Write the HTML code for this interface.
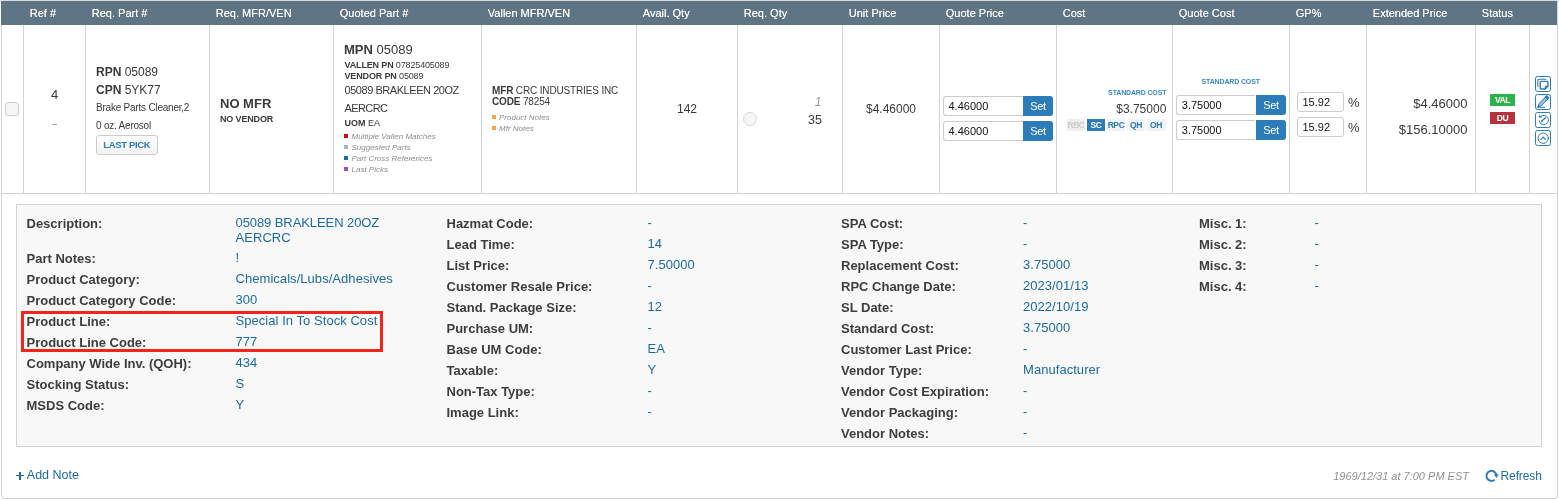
<!DOCTYPE html>
<html><head><meta charset="utf-8"><title>Quote line</title>
<style>
html,body{margin:0;padding:0;background:#fff;}
body{width:1559px;height:500px;position:relative;overflow:hidden;font-family:"Liberation Sans",sans-serif;}
.t{position:absolute;line-height:1;white-space:nowrap;}
.r{position:absolute;box-sizing:content-box;}
b{font-weight:bold;}
#w{position:absolute;left:0;top:0;width:1559px;height:500px;will-change:transform;overflow:hidden;}
</style></head><body><div id="w">
<div class="r" style="left:1px;top:0px;width:1555px;height:498px;border:1px solid #d4d4d4;border-top:none;border-radius:0 0 4px 4px;background:#fff;"></div>
<div class="r" style="left:0px;top:0px;width:1559px;height:1px;background:#dcdcdc;"></div>
<div class="r" style="left:1px;top:1px;width:1556px;height:24px;background:#5f7585;"></div>
<span class="t" style="top:7.69px;font-size:11px;color:#fff;left:29.8px;text-shadow:0 0 0.4px rgba(255,255,255,.7);">Ref #</span>
<span class="t" style="top:7.69px;font-size:11px;color:#fff;left:91.8px;text-shadow:0 0 0.4px rgba(255,255,255,.7);">Req. Part #</span>
<span class="t" style="top:7.69px;font-size:11px;color:#fff;left:215.8px;text-shadow:0 0 0.4px rgba(255,255,255,.7);">Req. MFR/VEN</span>
<span class="t" style="top:7.69px;font-size:11px;color:#fff;left:339.8px;text-shadow:0 0 0.4px rgba(255,255,255,.7);">Quoted Part #</span>
<span class="t" style="top:7.69px;font-size:11px;color:#fff;left:487.8px;text-shadow:0 0 0.4px rgba(255,255,255,.7);">Vallen MFR/VEN</span>
<span class="t" style="top:7.69px;font-size:11px;color:#fff;left:642.8px;text-shadow:0 0 0.4px rgba(255,255,255,.7);">Avail. Qty</span>
<span class="t" style="top:7.69px;font-size:11px;color:#fff;left:743.8px;text-shadow:0 0 0.4px rgba(255,255,255,.7);">Req. Qty</span>
<span class="t" style="top:7.69px;font-size:11px;color:#fff;left:848.8px;text-shadow:0 0 0.4px rgba(255,255,255,.7);">Unit Price</span>
<span class="t" style="top:7.69px;font-size:11px;color:#fff;left:945.8px;text-shadow:0 0 0.4px rgba(255,255,255,.7);">Quote Price</span>
<span class="t" style="top:7.69px;font-size:11px;color:#fff;left:1062.8px;text-shadow:0 0 0.4px rgba(255,255,255,.7);">Cost</span>
<span class="t" style="top:7.69px;font-size:11px;color:#fff;left:1178.8px;text-shadow:0 0 0.4px rgba(255,255,255,.7);">Quote Cost</span>
<span class="t" style="top:7.69px;font-size:11px;color:#fff;left:1295.8px;text-shadow:0 0 0.4px rgba(255,255,255,.7);">GP%</span>
<span class="t" style="top:7.69px;font-size:11px;color:#fff;left:1372.8px;text-shadow:0 0 0.4px rgba(255,255,255,.7);">Extended Price</span>
<span class="t" style="top:7.69px;font-size:11px;color:#fff;left:1481.8px;text-shadow:0 0 0.4px rgba(255,255,255,.7);">Status</span>
<div class="r" style="left:23px;top:25px;width:1px;height:168px;background:#d4d4d4;"></div>
<div class="r" style="left:85px;top:25px;width:1px;height:168px;background:#d4d4d4;"></div>
<div class="r" style="left:209px;top:25px;width:1px;height:168px;background:#d4d4d4;"></div>
<div class="r" style="left:333px;top:25px;width:1px;height:168px;background:#d4d4d4;"></div>
<div class="r" style="left:481px;top:25px;width:1px;height:168px;background:#d4d4d4;"></div>
<div class="r" style="left:636px;top:25px;width:1px;height:168px;background:#d4d4d4;"></div>
<div class="r" style="left:737px;top:25px;width:1px;height:168px;background:#d4d4d4;"></div>
<div class="r" style="left:842px;top:25px;width:1px;height:168px;background:#d4d4d4;"></div>
<div class="r" style="left:939px;top:25px;width:1px;height:168px;background:#d4d4d4;"></div>
<div class="r" style="left:1056px;top:25px;width:1px;height:168px;background:#d4d4d4;"></div>
<div class="r" style="left:1172px;top:25px;width:1px;height:168px;background:#d4d4d4;"></div>
<div class="r" style="left:1289px;top:25px;width:1px;height:168px;background:#d4d4d4;"></div>
<div class="r" style="left:1366px;top:25px;width:1px;height:168px;background:#d4d4d4;"></div>
<div class="r" style="left:1475px;top:25px;width:1px;height:168px;background:#d4d4d4;"></div>
<div class="r" style="left:1529px;top:25px;width:1px;height:168px;background:#d4d4d4;"></div>
<div class="r" style="left:1px;top:193px;width:1556px;height:1px;background:#d4d4d4;"></div>
<div class="r" style="left:5px;top:102px;width:12px;height:12px;border:1px solid #cfcfcf;border-radius:3px;background:#f6f6f6;"></div>
<span class="t" style="top:88.30px;font-size:13px;color:#3a3a3a;left:-95.5px;width:300px;text-align:center;">4</span>
<div class="r" style="left:51.5px;top:124.2px;width:5.5px;height:1.3px;background:#a6a6a6;"></div>
<span class="t" style="top:65.84px;font-size:12px;color:#3a3a3a;left:96px;"><b>RPN</b> 05089</span>
<span class="t" style="top:83.84px;font-size:12px;color:#3a3a3a;left:96px;"><b>CPN</b> 5YK77</span>
<span class="t" style="top:103.03px;font-size:10px;color:#3a3a3a;letter-spacing:-0.22px;left:96px;">Brake Parts Cleaner,2</span>
<span class="t" style="top:120.94px;font-size:10px;color:#3a3a3a;letter-spacing:-0.22px;left:96px;">0 oz. Aerosol</span>
<div class="r" style="left:96px;top:135px;width:60px;height:18px;border:1px solid #ccc;border-radius:3px;background:linear-gradient(#fff,#f2f2f2);"></div>
<span class="t" style="top:140.36px;font-size:9.5px;color:#2b7cb8;font-weight:bold;letter-spacing:-0.35px;left:-23.200000000000003px;width:300px;text-align:center;">LAST PICK</span>
<span class="t" style="top:97.40px;font-size:13px;color:#3a3a3a;font-weight:bold;left:220px;">NO MFR</span>
<span class="t" style="top:114.58px;font-size:9px;color:#3a3a3a;font-weight:bold;letter-spacing:-0.15px;left:220px;">NO VENDOR</span>
<span class="t" style="top:43.00px;font-size:13px;color:#3a3a3a;left:344px;"><b>MPN</b> 05089</span>
<span class="t" style="top:60.88px;font-size:9px;color:#3a3a3a;letter-spacing:-0.15px;left:344.5px;"><b>VALLEN PN</b> 07825405089</span>
<span class="t" style="top:72.08px;font-size:9px;color:#3a3a3a;letter-spacing:-0.15px;left:344.5px;"><b>VENDOR PN</b> 05089</span>
<span class="t" style="top:84.69px;font-size:11px;color:#3a3a3a;letter-spacing:-0.45px;left:344.5px;">05089 BRAKLEEN 20OZ</span>
<span class="t" style="top:103.09px;font-size:11px;color:#3a3a3a;letter-spacing:-0.6px;left:344.5px;">AERCRC</span>
<span class="t" style="top:119.08px;font-size:9px;color:#3a3a3a;left:344.5px;"><b>UOM</b> EA</span>
<div class="r" style="left:344px;top:134px;width:4px;height:4px;background:#d0021b;"></div>
<span class="t" style="top:132.73px;font-size:8px;color:#8e8e8e;font-style:italic;left:351.5px;">Multiple Vallen Matches</span>
<div class="r" style="left:344px;top:145.1px;width:4px;height:4px;background:#a3b4c2;"></div>
<span class="t" style="top:143.83px;font-size:8px;color:#8e8e8e;font-style:italic;left:351.5px;">Suggested Parts</span>
<div class="r" style="left:344px;top:156px;width:4px;height:4px;background:#1b6ca8;"></div>
<span class="t" style="top:154.73px;font-size:8px;color:#8e8e8e;font-style:italic;left:351.5px;">Part Cross References</span>
<div class="r" style="left:344px;top:167.2px;width:4px;height:4px;background:#9b4fc4;"></div>
<span class="t" style="top:165.93px;font-size:8px;color:#8e8e8e;font-style:italic;left:351.5px;">Last Picks</span>
<span class="t" style="top:85.83px;font-size:10px;color:#3a3a3a;letter-spacing:-0.15px;left:492px;"><b>MFR</b> CRC INDUSTRIES INC</span>
<span class="t" style="top:97.13px;font-size:10px;color:#3a3a3a;letter-spacing:-0.15px;left:492px;"><b>CODE</b> 78254</span>
<div class="r" style="left:492px;top:115.2px;width:4px;height:4px;background:#f5a742;"></div>
<span class="t" style="top:113.93px;font-size:8px;color:#8e8e8e;font-style:italic;left:499px;">Product Notes</span>
<div class="r" style="left:492px;top:126.19999999999999px;width:4px;height:4px;background:#f5a742;"></div>
<span class="t" style="top:124.93px;font-size:8px;color:#8e8e8e;font-style:italic;left:499px;">Mfr Notes</span>
<span class="t" style="top:102.64px;font-size:12px;color:#3a3a3a;left:537px;width:300px;text-align:center;">142</span>
<div class="r" style="left:743px;top:112px;width:12px;height:12px;border:1px solid #d8d8d8;border-radius:50%;background:#f6f6f6;"></div>
<span class="t" style="top:95.84px;font-size:12px;color:#999;font-style:italic;right:737.5px;">1</span>
<span class="t" style="top:113.72px;font-size:12.5px;color:#3a3a3a;right:737px;">35</span>
<span class="t" style="top:103.24px;font-size:12px;color:#3a3a3a;left:741px;width:300px;text-align:center;">$4.46000</span>
<div class="r" style="left:943px;top:96px;width:80px;height:18px;border:1px solid #ccc;border-right:none;border-radius:3px 0 0 3px;background:#fff;width:79px;"></div>
<div class="r" style="left:1023px;top:96px;width:30px;height:20px;background:#2b7cb8;border-radius:0 3px 3px 0;"></div>
<span class="t" style="top:100.69px;font-size:11px;color:#111;left:948.5px;">4.46000</span>
<span class="t" style="top:100.89px;font-size:11px;color:#fff;letter-spacing:-0.3px;left:888.0px;width:300px;text-align:center;">Set</span>
<div class="r" style="left:943px;top:121px;width:80px;height:18px;border:1px solid #ccc;border-right:none;border-radius:3px 0 0 3px;background:#fff;width:79px;"></div>
<div class="r" style="left:1023px;top:121px;width:30px;height:20px;background:#2b7cb8;border-radius:0 3px 3px 0;"></div>
<span class="t" style="top:125.69px;font-size:11px;color:#111;left:948.5px;">4.46000</span>
<span class="t" style="top:125.89px;font-size:11px;color:#fff;letter-spacing:-0.3px;left:888.0px;width:300px;text-align:center;">Set</span>
<span class="t" style="top:89.27px;font-size:7px;color:#3a8ac4;font-weight:bold;letter-spacing:-0.15px;right:392.70000000000005px;">STANDARD COST</span>
<span class="t" style="top:103.04px;font-size:12px;color:#3a3a3a;right:392.70000000000005px;">$3.75000</span>
<div class="r" style="left:1067px;top:119px;width:18px;height:12px;background:#f0f0f0;"></div>
<span class="t" style="top:121.40px;font-size:8.5px;color:#ccc;font-weight:bold;letter-spacing:-0.4px;left:926.0px;width:300px;text-align:center;">RBC</span>
<div class="r" style="left:1087px;top:119px;width:18px;height:12px;background:#2b7cb8;"></div>
<span class="t" style="top:121.40px;font-size:8.5px;color:#fff;font-weight:bold;letter-spacing:-0.4px;left:946.0px;width:300px;text-align:center;">SC</span>
<div class="r" style="left:1107px;top:119px;width:18px;height:12px;background:#f4f4f4;"></div>
<span class="t" style="top:121.40px;font-size:8.5px;color:#2b7cb8;font-weight:bold;letter-spacing:-0.4px;left:966.0px;width:300px;text-align:center;">RPC</span>
<div class="r" style="left:1127px;top:119px;width:18px;height:12px;background:#f4f4f4;"></div>
<span class="t" style="top:121.40px;font-size:8.5px;color:#2b7cb8;font-weight:bold;letter-spacing:-0.4px;left:986.0px;width:300px;text-align:center;">QH</span>
<div class="r" style="left:1146px;top:119px;width:20px;height:12px;background:#f4f4f4;"></div>
<span class="t" style="top:121.40px;font-size:8.5px;color:#2b7cb8;font-weight:bold;letter-spacing:-0.4px;left:1006.0px;width:300px;text-align:center;">OH</span>
<span class="t" style="top:78.07px;font-size:7px;color:#3a8ac4;font-weight:bold;letter-spacing:-0.15px;left:1080.7px;width:300px;text-align:center;">STANDARD COST</span>
<div class="r" style="left:1176.3px;top:95px;width:79.7px;height:18px;border:1px solid #ccc;border-right:none;border-radius:3px 0 0 3px;background:#fff;width:78px;"></div>
<div class="r" style="left:1256.0px;top:95px;width:30px;height:20px;background:#2b7cb8;border-radius:0 3px 3px 0;"></div>
<span class="t" style="top:99.69px;font-size:11px;color:#111;left:1181.8px;">3.75000</span>
<span class="t" style="top:99.89px;font-size:11px;color:#fff;letter-spacing:-0.3px;left:1121.0px;width:300px;text-align:center;">Set</span>
<div class="r" style="left:1176.3px;top:120px;width:79.7px;height:18px;border:1px solid #ccc;border-right:none;border-radius:3px 0 0 3px;background:#fff;width:78px;"></div>
<div class="r" style="left:1256.0px;top:120px;width:30px;height:20px;background:#2b7cb8;border-radius:0 3px 3px 0;"></div>
<span class="t" style="top:124.69px;font-size:11px;color:#111;left:1181.8px;">3.75000</span>
<span class="t" style="top:124.89px;font-size:11px;color:#fff;letter-spacing:-0.3px;left:1121.0px;width:300px;text-align:center;">Set</span>
<div class="r" style="left:1297px;top:92px;width:45px;height:18px;border:1px solid #ccc;border-radius:3px;background:#fff;"></div>
<span class="t" style="top:96.69px;font-size:11px;color:#111;left:1302.5px;">15.92</span>
<span class="t" style="top:96.00px;font-size:13px;color:#383838;left:1348px;">%</span>
<div class="r" style="left:1297px;top:117px;width:45px;height:18px;border:1px solid #ccc;border-radius:3px;background:#fff;"></div>
<span class="t" style="top:121.69px;font-size:11px;color:#111;left:1302.5px;">15.92</span>
<span class="t" style="top:121.00px;font-size:13px;color:#383838;left:1348px;">%</span>
<span class="t" style="top:97.00px;font-size:13px;color:#3a3a3a;right:91.5px;">$4.46000</span>
<span class="t" style="top:123.00px;font-size:13px;color:#3a3a3a;right:91.5px;">$156.10000</span>
<div class="r" style="left:1490px;top:94px;width:25px;height:12px;background:#2cb34a;"></div>
<span class="t" style="top:96.42px;font-size:8.6px;color:#fff;font-weight:bold;letter-spacing:-0.5px;left:1352.5px;width:300px;text-align:center;">VAL</span>
<div class="r" style="left:1490px;top:112px;width:25px;height:12px;background:#b5343c;"></div>
<span class="t" style="top:114.42px;font-size:8.6px;color:#fff;font-weight:bold;letter-spacing:-0.5px;left:1352.5px;width:300px;text-align:center;">DU</span>
<div class="r" style="left:1535px;top:76px;width:14px;height:14px;border:1px solid #2b7cb8;border-radius:2.5px;background:#fff;"></div>
<svg class="r" style="left:1535.2px;top:76px" width="15.6" height="15.6" viewBox="0 0 15.6 15.6" fill="none" stroke="#2b7cb8" stroke-width="0.9" stroke-linecap="round" stroke-linejoin="round"><path d="M10.8 3.2H4.1a1.3 1.3 0 0 0-1.3 1.3v5.9" stroke-width="1.1"/><path d="M6.3 5.4h5.6a1.1 1.1 0 0 1 1.1 1.1v3.6l-2.9 2.9H6.3a1.1 1.1 0 0 1-1.1-1.1V6.5a1.1 1.1 0 0 1 1.1-1.1z" stroke-width="1.4" fill="#fff"/><path d="M13 10h-2.3a.7.7 0 0 0-.7.7V13z" fill="#2b7cb8" stroke-width=".5"/></svg>
<div class="r" style="left:1535px;top:94px;width:14px;height:14px;border:1px solid #2b7cb8;border-radius:2.5px;background:#fff;"></div>
<svg class="r" style="left:1535.2px;top:94px" width="15.6" height="15.6" viewBox="0 0 15.6 15.6" fill="none" stroke="#2b7cb8" stroke-width="0.9" stroke-linecap="round" stroke-linejoin="round"><path d="M3 12.8l1-3.3 7.3-7.4a.9.9 0 0 1 1.2 0l1.1 1.1a.9.9 0 0 1 0 1.2l-7.3 7.4z" fill="#2b7cb8" fill-opacity=".5" stroke-width=".9"/><path d="M10.4 3l2.3 2.3" stroke-width="1.2"/><path d="M11.6 2.4l1.6 1.6" stroke-width="1.5"/><path d="M3 12.8l.5-1.6 1.1 1.1z" fill="#2b7cb8" stroke-width=".6"/><path d="M2 13.3h7.6" stroke-width="1"/></svg>
<div class="r" style="left:1535px;top:112px;width:14px;height:14px;border:1px solid #2b7cb8;border-radius:2.5px;background:#fff;"></div>
<svg class="r" style="left:1535.2px;top:112px" width="15.6" height="15.6" viewBox="0 0 15.6 15.6" fill="none" stroke="#2b7cb8" stroke-width="0.9" stroke-linecap="round" stroke-linejoin="round"><path d="M5.78 4.4A4.7 4.7 0 1 1 4.17 8.82" stroke-width="1"/><path d="M4.1 3.5l.3 2.3 2.2-.8z" fill="#2b7cb8" stroke-width=".5"/><path d="M7 8.8l3.6-3.1" stroke-width="1.45"/><path d="M6.1 9.8l.5-1.3.9.9z" fill="#2b7cb8" stroke-width=".4"/></svg>
<div class="r" style="left:1535px;top:130px;width:14px;height:14px;border:1px solid #2b7cb8;border-radius:2.5px;background:#fff;"></div>
<svg class="r" style="left:1535.2px;top:130px" width="15.6" height="15.6" viewBox="0 0 15.6 15.6" fill="none" stroke="#2b7cb8" stroke-width="0.9" stroke-linecap="round" stroke-linejoin="round"><circle cx="8.2" cy="8.2" r="5.2" stroke-width="1"/><path d="M6 9.3l2.2-2.25 2.2 2.25" stroke-width="1.2"/></svg>
<div class="r" style="left:16px;top:204px;width:1524px;height:241px;border:1px solid #d2d2d2;background:#f8f8f8;"></div>
<span class="t" style="top:217.20px;font-size:13px;color:#3d3d3d;font-weight:bold;left:26.5px;">Description:</span>
<span class="t" style="top:216.40px;font-size:13px;color:#1c6aa4;letter-spacing:-0.08px;left:235.5px;">05089 BRAKLEEN 20OZ</span>
<span class="t" style="top:231.20px;font-size:13px;color:#1c6aa4;letter-spacing:0.05px;left:235.5px;">AERCRC</span>
<span class="t" style="top:252.23px;font-size:13px;color:#3d3d3d;font-weight:bold;left:26.5px;">Part Notes:</span>
<span class="t" style="top:251.43px;font-size:13px;color:#1c6aa4;letter-spacing:0.05px;left:235.5px;">!</span>
<span class="t" style="top:273.16px;font-size:13px;color:#3d3d3d;font-weight:bold;left:26.5px;">Product Category:</span>
<span class="t" style="top:272.36px;font-size:13px;color:#1c6aa4;letter-spacing:0.05px;left:235.5px;">Chemicals/Lubs/Adhesives</span>
<span class="t" style="top:294.09px;font-size:13px;color:#3d3d3d;font-weight:bold;left:26.5px;">Product Category Code:</span>
<span class="t" style="top:293.29px;font-size:13px;color:#1c6aa4;letter-spacing:0.05px;left:235.5px;">300</span>
<span class="t" style="top:315.02px;font-size:13px;color:#3d3d3d;font-weight:bold;left:26.5px;">Product Line:</span>
<span class="t" style="top:314.22px;font-size:13px;color:#1c6aa4;letter-spacing:0.05px;left:235.5px;">Special In To Stock Cost</span>
<span class="t" style="top:335.95px;font-size:13px;color:#3d3d3d;font-weight:bold;left:26.5px;">Product Line Code:</span>
<span class="t" style="top:335.15px;font-size:13px;color:#1c6aa4;letter-spacing:0.05px;left:235.5px;">777</span>
<span class="t" style="top:356.88px;font-size:13px;color:#3d3d3d;font-weight:bold;left:26.5px;">Company Wide Inv. (QOH):</span>
<span class="t" style="top:356.08px;font-size:13px;color:#1c6aa4;letter-spacing:0.05px;left:235.5px;">434</span>
<span class="t" style="top:377.81px;font-size:13px;color:#3d3d3d;font-weight:bold;left:26.5px;">Stocking Status:</span>
<span class="t" style="top:377.01px;font-size:13px;color:#1c6aa4;letter-spacing:0.05px;left:235.5px;">S</span>
<span class="t" style="top:398.74px;font-size:13px;color:#3d3d3d;font-weight:bold;left:26.5px;">MSDS Code:</span>
<span class="t" style="top:397.94px;font-size:13px;color:#1c6aa4;letter-spacing:0.05px;left:235.5px;">Y</span>
<span class="t" style="top:217.20px;font-size:13px;color:#3d3d3d;font-weight:bold;left:446.5px;">Hazmat Code:</span>
<span class="t" style="top:216.40px;font-size:13px;color:#1c6aa4;letter-spacing:0.05px;left:647.5px;">-</span>
<span class="t" style="top:238.13px;font-size:13px;color:#3d3d3d;font-weight:bold;left:446.5px;">Lead Time:</span>
<span class="t" style="top:237.33px;font-size:13px;color:#1c6aa4;letter-spacing:0.05px;left:647.5px;">14</span>
<span class="t" style="top:259.06px;font-size:13px;color:#3d3d3d;font-weight:bold;left:446.5px;">List Price:</span>
<span class="t" style="top:258.26px;font-size:13px;color:#1c6aa4;letter-spacing:0.05px;left:647.5px;">7.50000</span>
<span class="t" style="top:279.99px;font-size:13px;color:#3d3d3d;font-weight:bold;left:446.5px;">Customer Resale Price:</span>
<span class="t" style="top:279.19px;font-size:13px;color:#1c6aa4;letter-spacing:0.05px;left:647.5px;">-</span>
<span class="t" style="top:300.92px;font-size:13px;color:#3d3d3d;font-weight:bold;left:446.5px;">Stand. Package Size:</span>
<span class="t" style="top:300.12px;font-size:13px;color:#1c6aa4;letter-spacing:0.05px;left:647.5px;">12</span>
<span class="t" style="top:321.85px;font-size:13px;color:#3d3d3d;font-weight:bold;left:446.5px;">Purchase UM:</span>
<span class="t" style="top:321.05px;font-size:13px;color:#1c6aa4;letter-spacing:0.05px;left:647.5px;">-</span>
<span class="t" style="top:342.78px;font-size:13px;color:#3d3d3d;font-weight:bold;left:446.5px;">Base UM Code:</span>
<span class="t" style="top:341.98px;font-size:13px;color:#1c6aa4;letter-spacing:0.05px;left:647.5px;">EA</span>
<span class="t" style="top:363.71px;font-size:13px;color:#3d3d3d;font-weight:bold;left:446.5px;">Taxable:</span>
<span class="t" style="top:362.91px;font-size:13px;color:#1c6aa4;letter-spacing:0.05px;left:647.5px;">Y</span>
<span class="t" style="top:384.64px;font-size:13px;color:#3d3d3d;font-weight:bold;left:446.5px;">Non-Tax Type:</span>
<span class="t" style="top:383.84px;font-size:13px;color:#1c6aa4;letter-spacing:0.05px;left:647.5px;">-</span>
<span class="t" style="top:405.57px;font-size:13px;color:#3d3d3d;font-weight:bold;left:446.5px;">Image Link:</span>
<span class="t" style="top:404.77px;font-size:13px;color:#1c6aa4;letter-spacing:0.05px;left:647.5px;">-</span>
<span class="t" style="top:217.20px;font-size:13px;color:#3d3d3d;font-weight:bold;left:841px;">SPA Cost:</span>
<span class="t" style="top:216.40px;font-size:13px;color:#1c6aa4;letter-spacing:0.05px;left:1023px;">-</span>
<span class="t" style="top:238.13px;font-size:13px;color:#3d3d3d;font-weight:bold;left:841px;">SPA Type:</span>
<span class="t" style="top:237.33px;font-size:13px;color:#1c6aa4;letter-spacing:0.05px;left:1023px;">-</span>
<span class="t" style="top:259.06px;font-size:13px;color:#3d3d3d;font-weight:bold;left:841px;">Replacement Cost:</span>
<span class="t" style="top:258.26px;font-size:13px;color:#1c6aa4;letter-spacing:0.05px;left:1023px;">3.75000</span>
<span class="t" style="top:279.99px;font-size:13px;color:#3d3d3d;font-weight:bold;left:841px;">RPC Change Date:</span>
<span class="t" style="top:279.19px;font-size:13px;color:#1c6aa4;letter-spacing:0.05px;left:1023px;">2023/01/13</span>
<span class="t" style="top:300.92px;font-size:13px;color:#3d3d3d;font-weight:bold;left:841px;">SL Date:</span>
<span class="t" style="top:300.12px;font-size:13px;color:#1c6aa4;letter-spacing:0.05px;left:1023px;">2022/10/19</span>
<span class="t" style="top:321.85px;font-size:13px;color:#3d3d3d;font-weight:bold;left:841px;">Standard Cost:</span>
<span class="t" style="top:321.05px;font-size:13px;color:#1c6aa4;letter-spacing:0.05px;left:1023px;">3.75000</span>
<span class="t" style="top:342.78px;font-size:13px;color:#3d3d3d;font-weight:bold;left:841px;">Customer Last Price:</span>
<span class="t" style="top:341.98px;font-size:13px;color:#1c6aa4;letter-spacing:0.05px;left:1023px;">-</span>
<span class="t" style="top:363.71px;font-size:13px;color:#3d3d3d;font-weight:bold;left:841px;">Vendor Type:</span>
<span class="t" style="top:362.91px;font-size:13px;color:#1c6aa4;letter-spacing:0.05px;left:1023px;">Manufacturer</span>
<span class="t" style="top:384.64px;font-size:13px;color:#3d3d3d;font-weight:bold;left:841px;">Vendor Cost Expiration:</span>
<span class="t" style="top:383.84px;font-size:13px;color:#1c6aa4;letter-spacing:0.05px;left:1023px;">-</span>
<span class="t" style="top:405.57px;font-size:13px;color:#3d3d3d;font-weight:bold;left:841px;">Vendor Packaging:</span>
<span class="t" style="top:404.77px;font-size:13px;color:#1c6aa4;letter-spacing:0.05px;left:1023px;">-</span>
<span class="t" style="top:426.50px;font-size:13px;color:#3d3d3d;font-weight:bold;left:841px;">Vendor Notes:</span>
<span class="t" style="top:425.70px;font-size:13px;color:#1c6aa4;letter-spacing:0.05px;left:1023px;">-</span>
<span class="t" style="top:217.20px;font-size:13px;color:#3d3d3d;font-weight:bold;left:1199px;">Misc. 1:</span>
<span class="t" style="top:216.40px;font-size:13px;color:#1c6aa4;letter-spacing:0.05px;left:1314.5px;">-</span>
<span class="t" style="top:238.13px;font-size:13px;color:#3d3d3d;font-weight:bold;left:1199px;">Misc. 2:</span>
<span class="t" style="top:237.33px;font-size:13px;color:#1c6aa4;letter-spacing:0.05px;left:1314.5px;">-</span>
<span class="t" style="top:259.06px;font-size:13px;color:#3d3d3d;font-weight:bold;left:1199px;">Misc. 3:</span>
<span class="t" style="top:258.26px;font-size:13px;color:#1c6aa4;letter-spacing:0.05px;left:1314.5px;">-</span>
<span class="t" style="top:279.99px;font-size:13px;color:#3d3d3d;font-weight:bold;left:1199px;">Misc. 4:</span>
<span class="t" style="top:279.19px;font-size:13px;color:#1c6aa4;letter-spacing:0.05px;left:1314.5px;">-</span>
<div class="r" style="left:21px;top:311px;width:356px;height:35px;border:3px solid #f3241c;"></div>
<div class="r" style="left:16px;top:475.1px;width:8.2px;height:1.3px;background:#1c6aa4;"></div>
<div class="r" style="left:19.45px;top:471.6px;width:1.3px;height:8.2px;background:#1c6aa4;"></div>
<span class="t" style="top:469.42px;font-size:12.5px;color:#1c6aa4;left:26.8px;">Add Note</span>
<span class="t" style="top:470.89px;font-size:11px;color:#909090;font-style:italic;right:90px;">1969/12/31 at 7:00 PM EST</span>
<svg class="r" style="left:1484px;top:469px" width="16" height="14" viewBox="0 0 16 14" fill="none" stroke="#2b7cb8" stroke-width="2"><path d="M10.6 10.73A5 5 0 1 1 12.38 6.2"/><path d="M10 5.4h4.7l-2.3 3.5z" fill="#2b7cb8" stroke="none"/></svg>
<span class="t" style="top:469.64px;font-size:12px;color:#1c6aa4;letter-spacing:-0.1px;left:1500.5px;">Refresh</span>
</div></body></html>
